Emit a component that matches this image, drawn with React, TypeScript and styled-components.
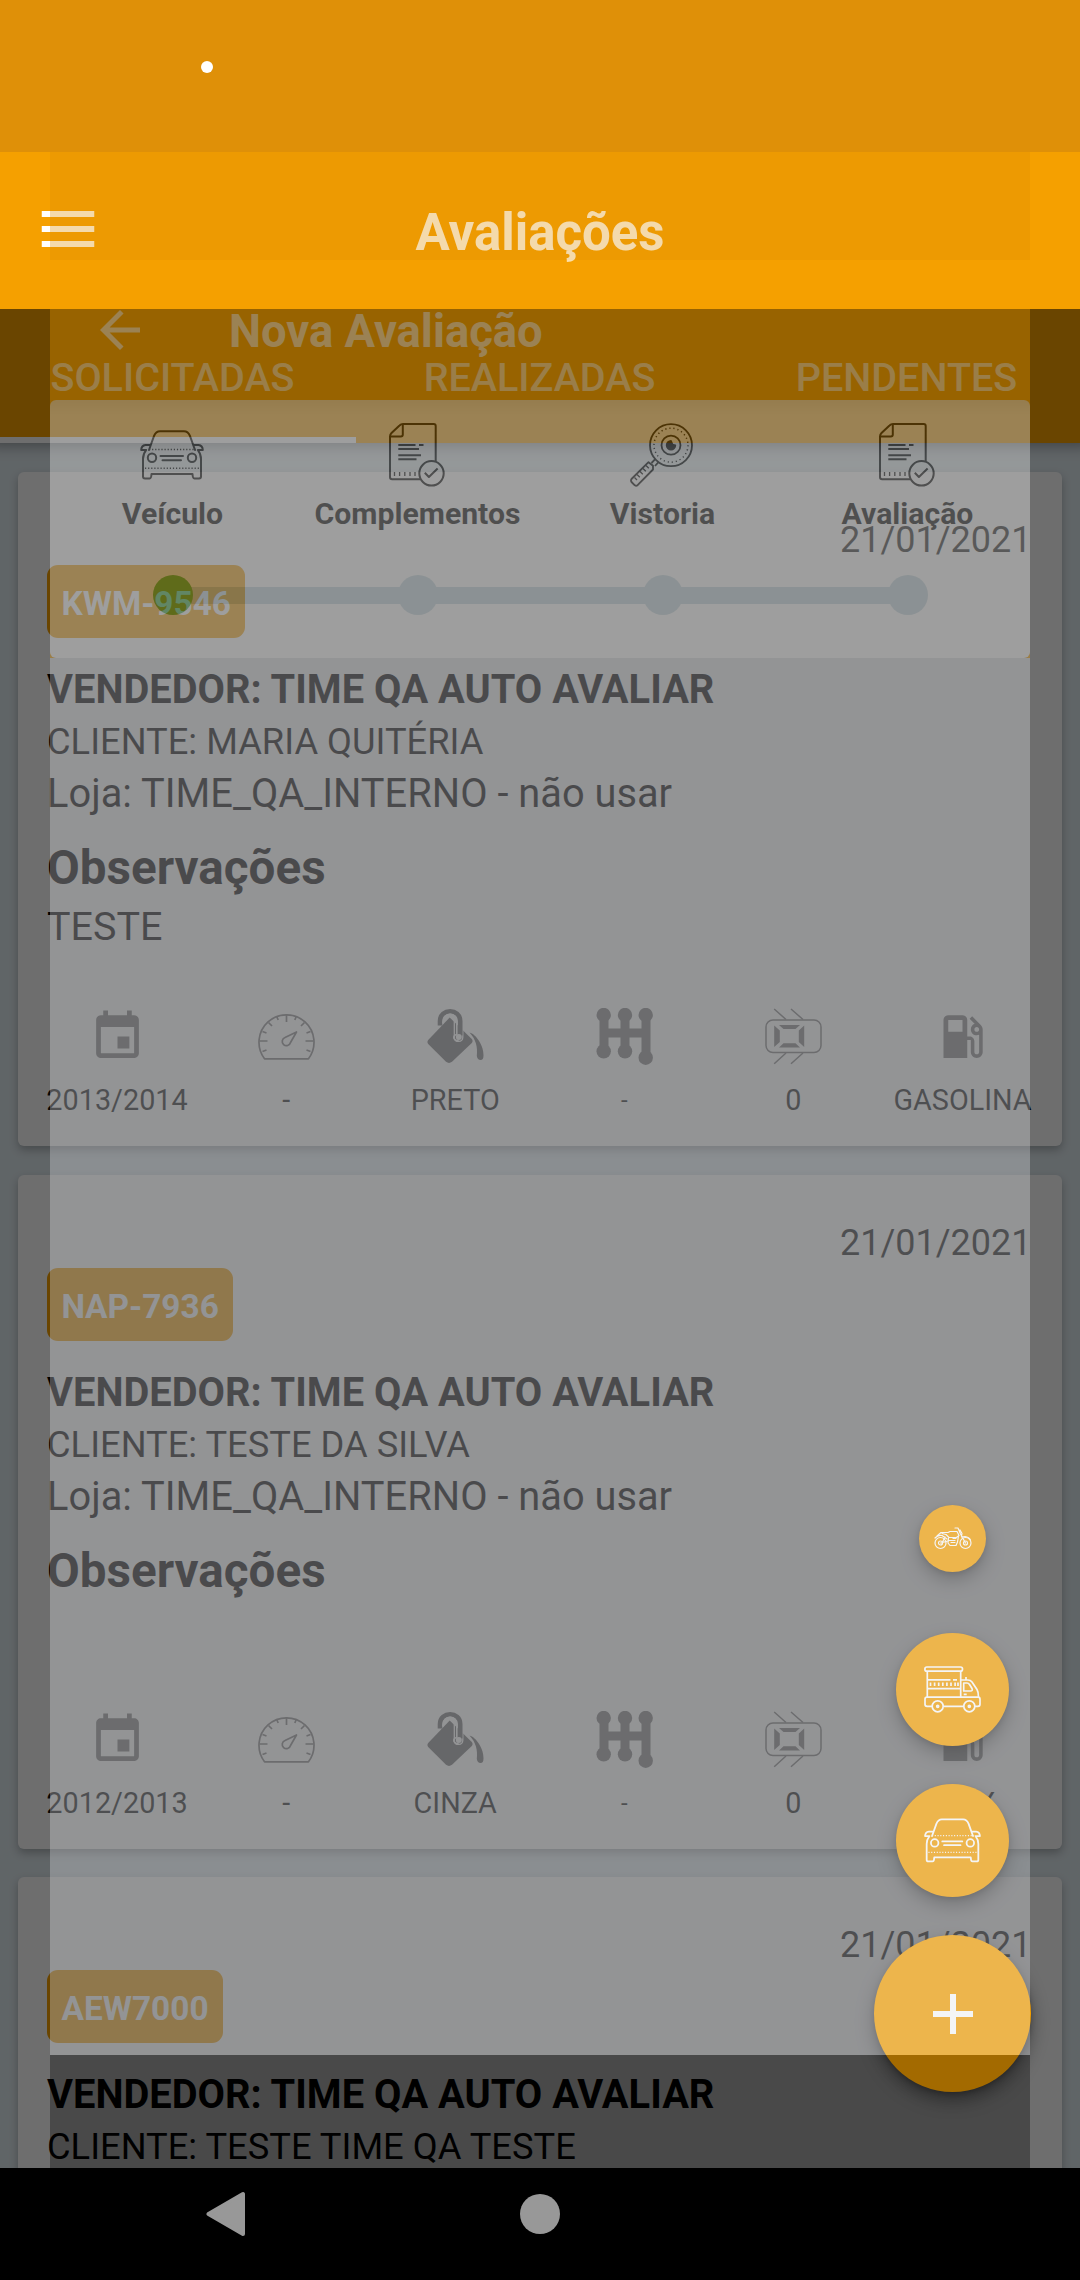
import React from "react";
import styled, { createGlobalStyle } from "styled-components";

const ORANGE = "#f5a000";
const PAGE = "#dfe9ee";
const SHEET_PAGE = "#dfe1e6";

const GlobalStyle = createGlobalStyle`
  * { box-sizing: border-box; }
  body { margin: 0; background: #000; font-family: Roboto, "Liberation Sans", sans-serif; }
`;

const Screen = styled.div`
  position: relative;
  width: 1080px;
  height: 2280px;
  overflow: hidden;
  display: flex;
  flex-direction: column;
  background: ${PAGE};
`;

const StatusBar = styled.div`
  flex: none;
  height: 152px;
  padding: 61px 0 0 201px;
  background: #df9008;
`;

const StatusDot = styled.div`
  width: 12px;
  height: 12px;
  border-radius: 50%;
  background: #fff;
`;

const AppBar = styled.header`
  flex: none;
  height: 157px;
  padding: 0 33px 3px;
  display: grid;
  grid-template-columns: 72px 1fr 72px;
  align-items: center;
  background: ${ORANGE};
`;

const AppTitle = styled.h1`
  margin: 8px 0 0;
  text-align: center;
  font-size: 51px;
  line-height: 60px;
  font-weight: 700;
  color: #fff;
`;

const Content = styled.main`
  position: relative;
  flex: none;
  height: 1859px;
  overflow: hidden;
`;

const Tabs = styled.nav`
  display: grid;
  grid-template-columns: repeat(3, 367px);
  width: 1101px;
  height: 134px;
  margin-left: -11px;
  background: ${ORANGE};
  box-shadow: 0 4px 12px rgba(0, 0, 0, 0.3);
`;

const Tab = styled.div<{ $active?: boolean }>`
  padding-top: 46px;
  border-bottom: 6px solid ${(p) => (p.$active ? "#fff" : "transparent")};
  text-align: center;
  font-size: 39.5px;
  line-height: 46px;
  font-weight: 500;
  color: #fff;
`;

const CardList = styled.div`
  display: flex;
  flex-direction: column;
  gap: 28.5px;
  padding: 29px 18px 0;
`;

const Card = styled.article`
  flex: none;
  display: flex;
  flex-direction: column;
  height: 674px;
  padding: 46px 0 0 29px;
  border-radius: 6px;
  background: #fff;
  box-shadow: 0 4px 8px rgba(0, 0, 0, 0.25);
`;

const DateText = styled.div`
  margin-right: 30.5px;
  text-align: right;
  font-size: 36px;
  line-height: 44px;
  color: #111;
`;

const Plate = styled.div`
  align-self: flex-start;
  height: 73px;
  margin: 3px 0 26px;
  padding: 3px 14.5px 0;
  border-radius: 11px;
  background: ${ORANGE};
  font-size: 33.4px;
  line-height: 71px;
  font-weight: 700;
  font-kerning: none;
  color: #fff;
`;

const Line = styled.div<{ $bold?: boolean; $size?: number }>`
  font-size: ${(p) => p.$size ?? 39.8}px;
  line-height: 52px;
  font-weight: ${(p) => (p.$bold ? 700 : 400)};
  color: #000;
`;

const NotesTitle = styled.h2`
  margin: 20px 0 8px;
  font-size: 47.6px;
  line-height: 56px;
  font-weight: 700;
  color: #000;
`;

const Notes = styled.div`
  height: 46px;
  font-size: 39.5px;
  line-height: 46px;
`;

const Specs = styled.div`
  display: grid;
  grid-template-columns: repeat(6, 169.1px);
  margin: 58px 0 0 -14.5px;
`;

const Spec = styled.div`
  display: flex;
  flex-direction: column;
  align-items: center;
  gap: 18px;
  color: #777;
`;

const SpecLabel = styled.span<{ $small?: boolean }>`
  font-size: ${(p) => (p.$small ? 24 : 28.8)}px;
  line-height: 34px;
  color: #111;
`;

const Backdrop = styled.div`
  position: absolute;
  inset: 0;
  background: rgba(0, 0, 0, 0.57);
`;

const FabStack = styled.div`
  position: absolute;
  right: 49px;
  bottom: 188px;
  width: 157px;
  display: flex;
  flex-direction: column;
  align-items: center;
  gap: 38px;
`;

const Fab = styled.button<{ $size: number; $shrunk?: boolean }>`
  display: flex;
  align-items: center;
  justify-content: center;
  width: ${(p) => p.$size}px;
  height: ${(p) => p.$size}px;
  margin: ${(p) => (p.$shrunk ? "23px 0" : "0")};
  padding: 0;
  border: 0;
  border-radius: 50%;
  background: ${ORANGE};
  color: #fff;
  box-shadow: 0 8px 18px rgba(0, 0, 0, 0.4), 0 2px 5px rgba(0, 0, 0, 0.2);
`;

const Sheet = styled.section`
  position: absolute;
  left: 50px;
  top: 152px;
  width: 980px;
  height: 2016px;
  display: flex;
  flex-direction: column;
  background: #000;
  opacity: 0.33;
`;

const SheetStatus = styled.div`
  flex: none;
  height: 108px;
  background: #df9008;
`;

const SheetTop = styled.div`
  flex: none;
  background: ${ORANGE};
`;

const SheetBar = styled.div`
  display: flex;
  align-items: center;
  gap: 79px;
  height: 140px;
  padding-left: 40px;
  color: #fff;
`;

const SheetTitle = styled.h2`
  margin: 3px 0 0;
  font-size: 45.4px;
  line-height: 52px;
  font-weight: 700;
`;

const Steps = styled.div`
  display: grid;
  grid-template-columns: repeat(4, 1fr);
  height: 258px;
  padding-top: 23px;
  border-radius: 6px;
  background: linear-gradient(rgba(0, 0, 0, 0.07), rgba(0, 0, 0, 0) 16px), #fff;
`;

const Step = styled.div`
  display: flex;
  flex-direction: column;
  align-items: center;
  color: #111;

  svg {
    margin-left: -1px;
  }
`;

const StepLabel = styled.span`
  margin: 8px 0 42px;
  font-size: 30.2px;
  line-height: 38px;
  font-weight: 700;
`;

const Track = styled.div<{ $first?: boolean; $last?: boolean }>`
  display: flex;
  align-items: center;
  justify-content: center;
  align-self: stretch;
  height: 40px;
  background: linear-gradient(#c8dae1, #c8dae1) no-repeat
    ${(p) => (p.$first ? "100% 50%" : "0 50%")} /
    ${(p) => (p.$first || p.$last ? "50%" : "100%")} 17px;
`;

const Dot = styled.i<{ $done?: boolean }>`
  width: 40px;
  height: 40px;
  border-radius: 50%;
  background: ${(p) => (p.$done ? "#49b850" : "#c8dae1")};
`;

const SheetBody = styled.div`
  flex: none;
  height: 1397px;
  background: ${SHEET_PAGE};
`;

const NavBar = styled.footer`
  position: relative;
  flex: none;
  height: 112px;
  display: flex;
  align-items: center;
  padding: 0 0 20px 206px;
  gap: 274px;
  background: #000;
`;

const HomeButton = styled.div`
  width: 40px;
  height: 40px;
  border-radius: 50%;
  background: #989898;
`;

const Menu = () => (
  <svg width="70" height="72" viewBox="0 0 24 24" preserveAspectRatio="none" fill="#fff">
    <path d="M3 18h18v-2H3v2zm0-5h18v-2H3v2zm0-7v2h18V6H3z" />
  </svg>
);

const Back = () => (
  <svg width="60" height="60" viewBox="0 0 24 24" fill="currentColor">
    <path d="M20 11H7.83l5.59-5.59L12 4l-8 8 8 8 1.41-1.41L7.83 13H20v-2z" />
  </svg>
);

const CarIcon = ({ size = 64 }: { size?: number }) => (
  <svg width={size} height={size} viewBox="0 0 64 64" fill="none" stroke="currentColor" strokeWidth="2" strokeLinejoin="round" strokeLinecap="round">
    <path d="M9 27 14 13Q16 8.3 20 8.3H44Q48 8.3 50 13L55 27" />
    <path d="M10 22H5.5Q1.4 22.5 1.2 27H6.2Q3 31 3 36V53.5Q3 55.5 5 55.5H9.6Q11.3 55.5 11.5 51H52.5Q52.7 55.5 54.4 55.5H59Q61 55.5 61 53.5V36Q61 31 57.8 27H62.8Q62.6 22.5 58.500 22H54" />
    <circle cx="12" cy="34.700" r="4.200" />
    <circle cx="52" cy="34.700" r="4.200" />
    <path d="M20.500 33H43M22.500 37.200H41" />
    <path d="M9 26.500H56M5 45.300H60" strokeWidth="1.500" strokeLinecap="butt" strokeDasharray="1.200 1.900" />
  </svg>
);

const DocIcon = () => (
  <svg width="64" height="64" viewBox="0 0 64 64" fill="none" stroke="currentColor" strokeWidth="2" strokeLinejoin="round">
    <path d="M50.700 38V3Q50.700 1 48.700 1H18Q16 1 14.500 2.500L6.500 10Q5 11.500 5 13.500V54Q5 56.200 7.200 56.200H35.500" />
    <path d="M17.800 1.500V11.500Q17.800 13.500 15.800 13.500H5.500" />
    <path d="M13.300 22H30.500M34 22h4.500M13.300 26H34M13.300 32.200H36M13.300 36.300H31.500" />
    <path d="M9.500 49v4M14.600 49v4M19.800 49v4M25 49v4M30 49v4" strokeWidth="1.300" />
    <circle cx="46.500" cy="50.300" r="12.200" />
    <path d="M39.800 49.700 43.900 54 52.600 45.500" />
  </svg>
);

const LensIcon = () => (
  <svg width="64" height="64" viewBox="0 0 64 64" fill="none" stroke="currentColor" strokeWidth="1.800" strokeLinejoin="round">
    <circle cx="41" cy="22.200" r="21" />
    <circle cx="41" cy="22.200" r="17" strokeWidth="1.500" strokeDasharray="1.200 2.900" />
    <circle cx="41" cy="22.200" r="9.500" />
    <path d="M41 18a4.300 4.300 0 1 0 4.300 4.300L42.500 21.500Z" fill="currentColor" />
    <path d="M25.200 36.200 21.500 40M28.500 39.200 25 43M18.500 39.200 1.500 56Q.5 57.500 1.500 59L4.800 62.300Q6.200 63.200 7.600 62.200L23 46.500V42.800Z" />
    <path d="M16 42.500l2.800 2.800M13 45.500l2.800 2.800M10 48.500l2.800 2.800M7 51.500l2.800 2.800M4.500 54.500l2.500 2.500" strokeWidth="1.300" />
  </svg>
);

const CalendarIcon = () => (
  <svg width="57" height="57" viewBox="0 0 24 24" fill="currentColor">
    <path d="M17 12h-5v5h5v-5zM16 1v2H8V1H6v2H5c-1.110 0-1.990.9-1.990 2L3 19c0 1.100.89 2 2 2h14c1.100 0 2-.9 2-2V5c0-1.100-.9-2-2-2h-1V1h-2zm3 18H5V8h14v11z" />
  </svg>
);

const GaugeIcon = () => (
  <svg width="57" height="57" viewBox="0 0 57 57" fill="none" stroke="currentColor" strokeWidth="1.700" strokeLinejoin="round">
    <path d="M6.500 50.800A27.500 27.500 0 1 1 50.500 50.800Z" />
    <path d="M28.500 6v8M1.500 33h8M47.500 33h8M4.500 23.500l4 1.500M52.500 23.500l-4 1.500M10.500 14.500l3.500 3.500M46.500 14.500l-3.500 3.500M18.500 8l1.700 4M38.500 8l-1.700 4M4.500 43.500l4-1.500M52.500 43.500l-4-1.500" />
    <path d="M38.500 24 32.500 34.500A4.200 4.200 0 1 1 27 29.500Z" />
  </svg>
);

const PaintIcon = () => (
  <svg width="57" height="57" viewBox="0 0 57 57" fill="#646464">
    <path d="M22.700 9.500 44.800 31Q46.300 33 44.800 35L25 53.800Q22 56 19 53.800L1.200 36Q-.3 34 1.200 32Z" />
    <path d="M27.300 10V30A4.300 4.300 0 0 0 35.800 29.500V13" fill="none" stroke="#fff" strokeWidth="1.300" />
    <path d="M13 17.500V13C13 0 33.200 0 33.200 13V27.500" fill="none" stroke="#646464" strokeWidth="4.600" />
    <path d="M15.800 15.500C16 3 29.800 4 29.800 13.500V26.500A3 3 0 1 0 31.500 32" fill="none" stroke="#fff" strokeWidth="1.600" />
    <circle cx="31.800" cy="29" r="3" fill="#fff" />
    <path d="M42.500 24.500C49 26 57 38 56.500 47.500Q56.500 52 53.500 52T49.800 48C50.800 39 49 31.500 42.500 24.500Z" />
  </svg>
);

const GearIcon = () => (
  <svg width="57" height="57" viewBox="0 0 57 57" fill="currentColor">
    <path d="M8 7V44M29 7V44M50 7V50M8 25H50" stroke="currentColor" strokeWidth="9" />
    <circle cx="7.700" cy="7" r="7.200" />
    <circle cx="29" cy="7" r="7.200" />
    <circle cx="49.700" cy="7" r="7.200" />
    <circle cx="7.700" cy="43.300" r="7.200" />
    <circle cx="29" cy="43.300" r="7.200" />
    <circle cx="49.700" cy="49.700" r="7.200" />
  </svg>
);

const ArmorIcon = () => (
  <svg width="57" height="57" viewBox="0 0 57 57" fill="currentColor">
    <rect x="1" y="12" width="55" height="32.500" rx="7" fill="none" stroke="currentColor" strokeWidth="1.500" />
    <path d="M9.200 17.500 14.800 22.500V34L9.200 39ZM39.200 17.500 33.800 22.500V34L39.200 39ZM14 17H35L30.500 21H18.500ZM14 39.500H35L30.500 35.200H18.500Z" />
    <path d="M9.200 1 21 11.500M26 1 38 11.500M21 45 9.200 55.700M38 45 26 55.700" stroke="currentColor" strokeWidth="1.500" />
  </svg>
);

const FuelIcon = () => (
  <svg width="57" height="57" viewBox="0 0 24 24" fill="currentColor">
    <path d="M19.770 7.230l.01-.01-3.720-3.720L15 4.560l2.110 2.110c-.94.36-1.610 1.260-1.610 2.330 0 1.380 1.120 2.500 2.500 2.500.36 0 .69-.08 1-.21v7.210c0 .55-.45 1-1 1s-1-.45-1-1V14c0-1.100-.9-2-2-2h-1V5c0-1.100-.9-2-2-2H6c-1.100 0-2 .9-2 2v16h10v-7.500h1.500v5c0 1.380 1.120 2.500 2.500 2.500s2.500-1.120 2.500-2.500V9c0-.69-.28-1.320-.73-1.770zM12 10H6V5h6v5zm6 0c-.55 0-1-.45-1-1s.45-1 1-1 1 .45 1 1-.45 1-1 1z" />
  </svg>
);

const TruckIcon = () => (
  <svg width="57" height="57" viewBox="0 0 57 57" fill="none" stroke="currentColor" strokeWidth="1.700" strokeLinejoin="round">
    <rect x=".9" y="6" width="37.600" height="4.200" rx="2" />
    <path d="M3.300 10.200V36.200M36.700 10.200V36.200M3.300 18.800H26.500M29 18.800h4M3.300 27.700H36.700" />
    <path d="M6.500 21.500v3.500M10.600 21.500v3.500M14.700 21.500v3.500M18.800 21.500v3.500M22.900 21.500v3.500M27 21.500v3.500M31.100 21.500v3.500M34 21.500v3.500" />
    <path d="M37 19H44Q46.500 19 48 21L53 28.500Q54.500 31 54.500 36.200M39.700 22H43Q44.500 22 45.500 23.500L48 27.500Q49 30 46.500 30H39.700ZM42 16V18.500M39.700 33.300h3" />
    <path d="M8 45.300H3Q1 45.300 1 43.300V38.200Q1 36.200 3 36.200H54Q56 36.200 56 38.200V43.300Q56 45.300 54 45.300H51M19.500 45.300H39.500" />
    <circle cx="13.700" cy="45.300" r="5.500" />
    <circle cx="45.300" cy="45.300" r="5.500" />
    <circle cx="13.700" cy="45.300" r="1" />
    <circle cx="45.300" cy="45.300" r="1" />
  </svg>
);

const MotoIcon = () => (
  <svg width="38" height="30" viewBox="0 0 38 30" fill="none" stroke="currentColor" strokeWidth="1.200" strokeLinejoin="round" strokeLinecap="round">
    <circle cx="6.500" cy="19" r="5.500" />
    <circle cx="6.500" cy="19" r="2" />
    <circle cx="31.500" cy="19" r="5.500" />
    <circle cx="31.500" cy="19" r="2" />
    <path d="M21 4H24L26.500 10 31.500 19M26 6 28 9.500 27.500 12M1 14Q4 10.500 8 11.500L13 15M3 12 7 8.500H14L16 7.500H23L25 11.500 22.500 13.500H15L12 10.500 8 9.500M6.500 19 14 17M11 13 8 19M27.500 13 31 12.500Q35 13 36.500 16" />
    <path d="M14.500 14 14 19 16 21.500H22L23.500 18 24.500 12M17 18.500h4M19 14.500h3M15 16.500h6" />
  </svg>
);

const PlusIcon = () => (
  <svg width="40" height="40" viewBox="0 0 40 40" stroke="currentColor" strokeWidth="6">
    <path d="M20 0V40M0 20H40" />
  </svg>
);

const NavBack = () => (
  <svg width="40" height="46" viewBox="0 0 40 46" fill="#989898" stroke="#989898" strokeWidth="4" strokeLinejoin="round">
    <path d="M2.500 23 37 3V43Z" />
  </svg>
);

const ICONS = [CalendarIcon, GaugeIcon, PaintIcon, GearIcon, ArmorIcon, FuelIcon];

const VEHICLES = [
  {
    date: "21/01/2021",
    plate: "KWM-9546",
    client: "MARIA QUITÉRIA",
    notes: "TESTE",
    specs: ["2013/2014", "-", "PRETO", "-", "0", "GASOLINA"],
  },
  {
    date: "21/01/2021",
    plate: "NAP-7936",
    client: "TESTE DA SILVA",
    notes: "",
    specs: ["2012/2013", "-", "CINZA", "-", "0", "FLEX"],
  },
  {
    date: "21/01/2021",
    plate: "AEW7000",
    client: "TESTE TIME QA TESTE",
    notes: "",
    specs: [],
  },
];

const STEPS = [
  { label: "Veículo", Icon: CarIcon },
  { label: "Complementos", Icon: DocIcon },
  { label: "Vistoria", Icon: LensIcon },
  { label: "Avaliação", Icon: DocIcon },
];

export default function App() {
  return (
    <>
      <GlobalStyle />
      <Screen>
        <StatusBar>
          <StatusDot />
        </StatusBar>
        <AppBar>
          <Menu />
          <AppTitle>Avaliações</AppTitle>
        </AppBar>
        <Content>
          <Tabs>
            <Tab $active>SOLICITADAS</Tab>
            <Tab>REALIZADAS</Tab>
            <Tab>PENDENTES</Tab>
          </Tabs>
          <CardList>
            {VEHICLES.map((v) => (
              <Card key={v.plate}>
                <DateText>{v.date}</DateText>
                <Plate>{v.plate}</Plate>
                <Line $bold>VENDEDOR: TIME QA AUTO AVALIAR</Line>
                <Line $size={36.3}>CLIENTE: {v.client}</Line>
                {v.specs.length > 0 && (
                  <>
                    <Line>Loja: TIME_QA_INTERNO - não usar</Line>
                    <NotesTitle>Observações</NotesTitle>
                    <Notes>{v.notes}</Notes>
                    <Specs>
                      {v.specs.map((text, i) => {
                        const Icon = ICONS[i];
                        return (
                          <Spec key={i}>
                            <Icon />
                            <SpecLabel $small={i === 3}>{text}</SpecLabel>
                          </Spec>
                        );
                      })}
                    </Specs>
                  </>
                )}
              </Card>
            ))}
          </CardList>
          <Backdrop />
        </Content>
        <FabStack>
          <Fab $size={67} $shrunk>
            <MotoIcon />
          </Fab>
          <Fab $size={113}>
            <TruckIcon />
          </Fab>
          <Fab $size={113}>
            <CarIcon size={57} />
          </Fab>
          <Fab $size={157}>
            <PlusIcon />
          </Fab>
        </FabStack>
        <Sheet>
          <SheetStatus />
          <SheetTop>
            <SheetBar>
              <Back />
              <SheetTitle>Nova Avaliação</SheetTitle>
            </SheetBar>
            <Steps>
              {STEPS.map(({ label, Icon }, i) => (
                <Step key={label}>
                  <Icon />
                  <StepLabel>{label}</StepLabel>
                  <Track $first={i === 0} $last={i === STEPS.length - 1}>
                    <Dot $done={i === 0} />
                  </Track>
                </Step>
              ))}
            </Steps>
          </SheetTop>
          <SheetBody />
        </Sheet>
        <NavBar>
          <NavBack />
          <HomeButton />
        </NavBar>
      </Screen>
    </>
  );
}
